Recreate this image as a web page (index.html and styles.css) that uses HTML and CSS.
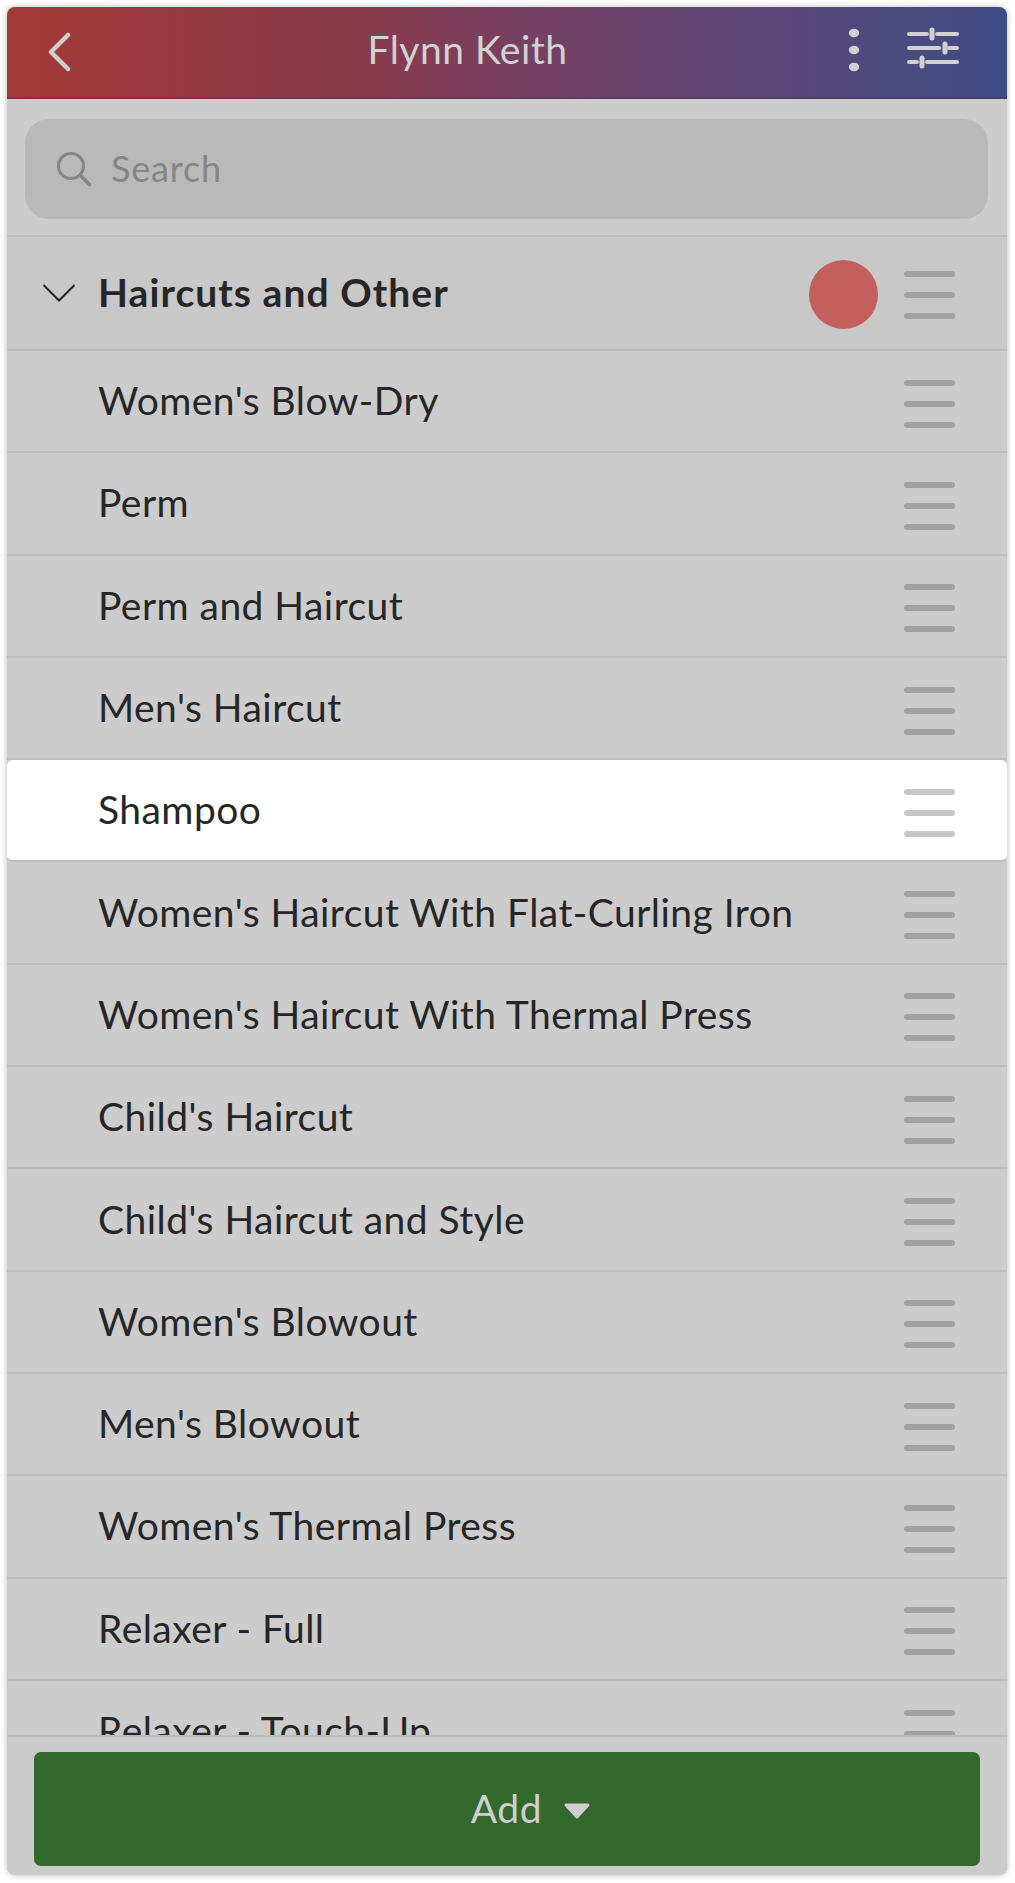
FILE: index.html
```html
<!DOCTYPE html>
<html lang="en">
<head>
<meta charset="utf-8">
<title>Flynn Keith</title>
<link rel="stylesheet" href="styles.css">
</head>
<body>
<main class="panel">
  <header class="topbar">
    <svg class="back" width="24" height="40" viewBox="0 0 24 40"><path d="M21 3 4 20l17 17" fill="none" stroke="#cfcfcf" stroke-width="4.5" stroke-linecap="round" stroke-linejoin="round"/></svg>
    <h1 class="title">Flynn Keith</h1>
    <svg class="kebab" width="12" height="46" viewBox="0 0 12 46"><ellipse cx="6" cy="6" rx="5.2" ry="4.2" fill="#d0d0d0"/><ellipse cx="6" cy="23" rx="5.2" ry="4.2" fill="#d0d0d0"/><ellipse cx="6" cy="40" rx="5.2" ry="4.2" fill="#d0d0d0"/></svg>
    <svg class="sliders" width="52" height="42" viewBox="0 0 52 42"><g fill="none" stroke="#d0d0d0" stroke-linecap="round"><path stroke-width="4" d="M2 7h18M30 7h20M2 21h30M42 21h8M2 35h8M20 35h30"/><path stroke-width="5" d="M25 3v8M38 17v8M15 31v8"/></g></svg>
  </header>
  <div class="search-wrap">
    <div class="search">
      <svg width="36" height="36" viewBox="0 0 36 36"><circle cx="15" cy="15" r="12.5" fill="none" stroke="#858585" stroke-width="3"/><path d="m24.500 24.500 9 9" stroke="#858585" stroke-width="3.500" stroke-linecap="round"/></svg>
      <span class="placeholder">Search</span>
    </div>
  </div>
  <div class="list">
    <div class="row group">
      <svg class="chev" width="34" height="20" viewBox="0 0 34 20"><path d="m1.500 2 15.500 15.500L32.500 2" fill="none" stroke="#222" stroke-width="2"/></svg>
      <span class="name">Haircuts and Other</span>
      <span class="dot"></span>
      <span class="handle"><i></i><i></i><i></i></span>
    </div>
    <div class="row"><span class="name">Women's Blow-Dry</span><span class="handle"><i></i><i></i><i></i></span></div>
    <div class="row"><span class="name">Perm</span><span class="handle"><i></i><i></i><i></i></span></div>
    <div class="row"><span class="name">Perm and Haircut</span><span class="handle"><i></i><i></i><i></i></span></div>
    <div class="row"><span class="name">Men's Haircut</span><span class="handle"><i></i><i></i><i></i></span></div>
    <div class="row active"><span class="name">Shampoo</span><span class="handle"><i></i><i></i><i></i></span></div>
    <div class="row"><span class="name">Women's Haircut With Flat-Curling Iron</span><span class="handle"><i></i><i></i><i></i></span></div>
    <div class="row"><span class="name">Women's Haircut With Thermal Press</span><span class="handle"><i></i><i></i><i></i></span></div>
    <div class="row"><span class="name">Child's Haircut</span><span class="handle"><i></i><i></i><i></i></span></div>
    <div class="row"><span class="name">Child's Haircut and Style</span><span class="handle"><i></i><i></i><i></i></span></div>
    <div class="row"><span class="name">Women's Blowout</span><span class="handle"><i></i><i></i><i></i></span></div>
    <div class="row"><span class="name">Men's Blowout</span><span class="handle"><i></i><i></i><i></i></span></div>
    <div class="row"><span class="name">Women's Thermal Press</span><span class="handle"><i></i><i></i><i></i></span></div>
    <div class="row"><span class="name">Relaxer - Full</span><span class="handle"><i></i><i></i><i></i></span></div>
    <div class="row"><span class="name">Relaxer - Touch-Up</span><span class="handle"><i></i><i></i><i></i></span></div>
  </div>
  <footer class="footer">
    <button class="add" type="button"><span class="add-label">Add</span><svg class="caret" width="28" height="18" viewBox="0 0 28 18"><path d="M3 3h22L14 15z" fill="#cfcfcf" stroke="#cfcfcf" stroke-width="3" stroke-linejoin="round"/></svg></button>
  </footer>
</main>
</body>
</html>
```
FILE: styles.css
```css
* { box-sizing: border-box; }
html, body { margin: 0; height: 100%; background: #fff; }
body {
  padding: 7px 8px 8px 7px;
  font-family: "Lato", "Open Sans", sans-serif;
  color: #262626;
  overflow: hidden;
}
.panel {
  height: 100%;
  display: flex;
  flex-direction: column;
  background: #cccccc;
  border-radius: 8px;
  overflow: hidden;
  box-shadow: 0 0 6px rgba(0,0,0,.28);
}
.topbar {
  flex: none;
  height: 92px;
  display: flex;
  align-items: center;
  padding: 0 48px 0 40px;
  background: linear-gradient(90deg, #a33a36 0%, #8a3a4c 35%, #6d436d 60%, #3f4c85 100%);
  border-bottom: 2px solid rgba(70,40,80,.35);
}
.back { flex: none; }
.title {
  flex: 1;
  margin: 0 0 6px;
  padding-left: 16px;
  text-align: center;
  font-size: 39px;
  font-weight: 400;
  color: #d2d2d2;
  letter-spacing: .5px;
}
.kebab { flex: none; margin-right: 47px; margin-top: -4px; }
.sliders { flex: none; margin-top: -9px; }
.search-wrap {
  flex: none;
  padding: 20px 19px 16px 18px;
  border-bottom: 2px solid #bdbdbd;
}
.search {
  height: 100px;
  display: flex;
  align-items: center;
  gap: 19px;
  padding-left: 31px;
  background: #b9b9b9;
  border-radius: 24px;
}
.placeholder { font-size: 36px; color: #858585; letter-spacing: .8px; margin-bottom: 2px; }
.list { flex: 1; min-height: 0; overflow: hidden; }
.row {
  height: 102.3px;
  display: flex;
  align-items: center;
  padding: 5px 52px 0 91px;
  border-bottom: 2px solid #bdbdbd;
  font-size: 39px;
  letter-spacing: .46px;
}
.row .name { flex: 1; white-space: nowrap; margin-bottom: 7px; }
.group {
  height: 114px;
  padding-top: 3px;
  padding-left: 35px;
  background: #c8c8c8;
}
.group .name { margin-left: 22px; margin-bottom: 5px; font-weight: 700; letter-spacing: 1.05px; }
.chev { flex: none; margin-top: -3px; }
.dot {
  flex: none;
  width: 69px;
  height: 69px;
  margin-right: 26px;
  border-radius: 50%;
  background: #c35f5d;
}
.handle {
  flex: none;
  width: 51px;
  display: flex;
  flex-direction: column;
  gap: 15px;
}
.handle i { display: block; height: 6px; border-radius: 3px; background: #a1a1a1; }
.active {
  background: #fff;
  border-radius: 6px;
  border-bottom-color: #bdbdbd;
}
.active .handle i { background: #c6c6c6; }
.footer {
  flex: none;
  height: 140px;
  padding: 15px 27px 9px 27px;
  border-top: 2px solid #bdbdbd;
  background: #cbcbcb;
}
.add {
  width: 100%;
  height: 114px;
  display: flex;
  align-items: center;
  justify-content: center;
  gap: 21px;
  padding: 0 0 0 48px;
  border: 0;
  border-radius: 7px;
  background: #33692d;
  color: #cfcfcf;
  font: 400 39px "Lato", "Open Sans", sans-serif;
  letter-spacing: .6px;
}
.add-label { margin-bottom: 2px; }
.caret { flex: none; margin-top: 4px; }
```
